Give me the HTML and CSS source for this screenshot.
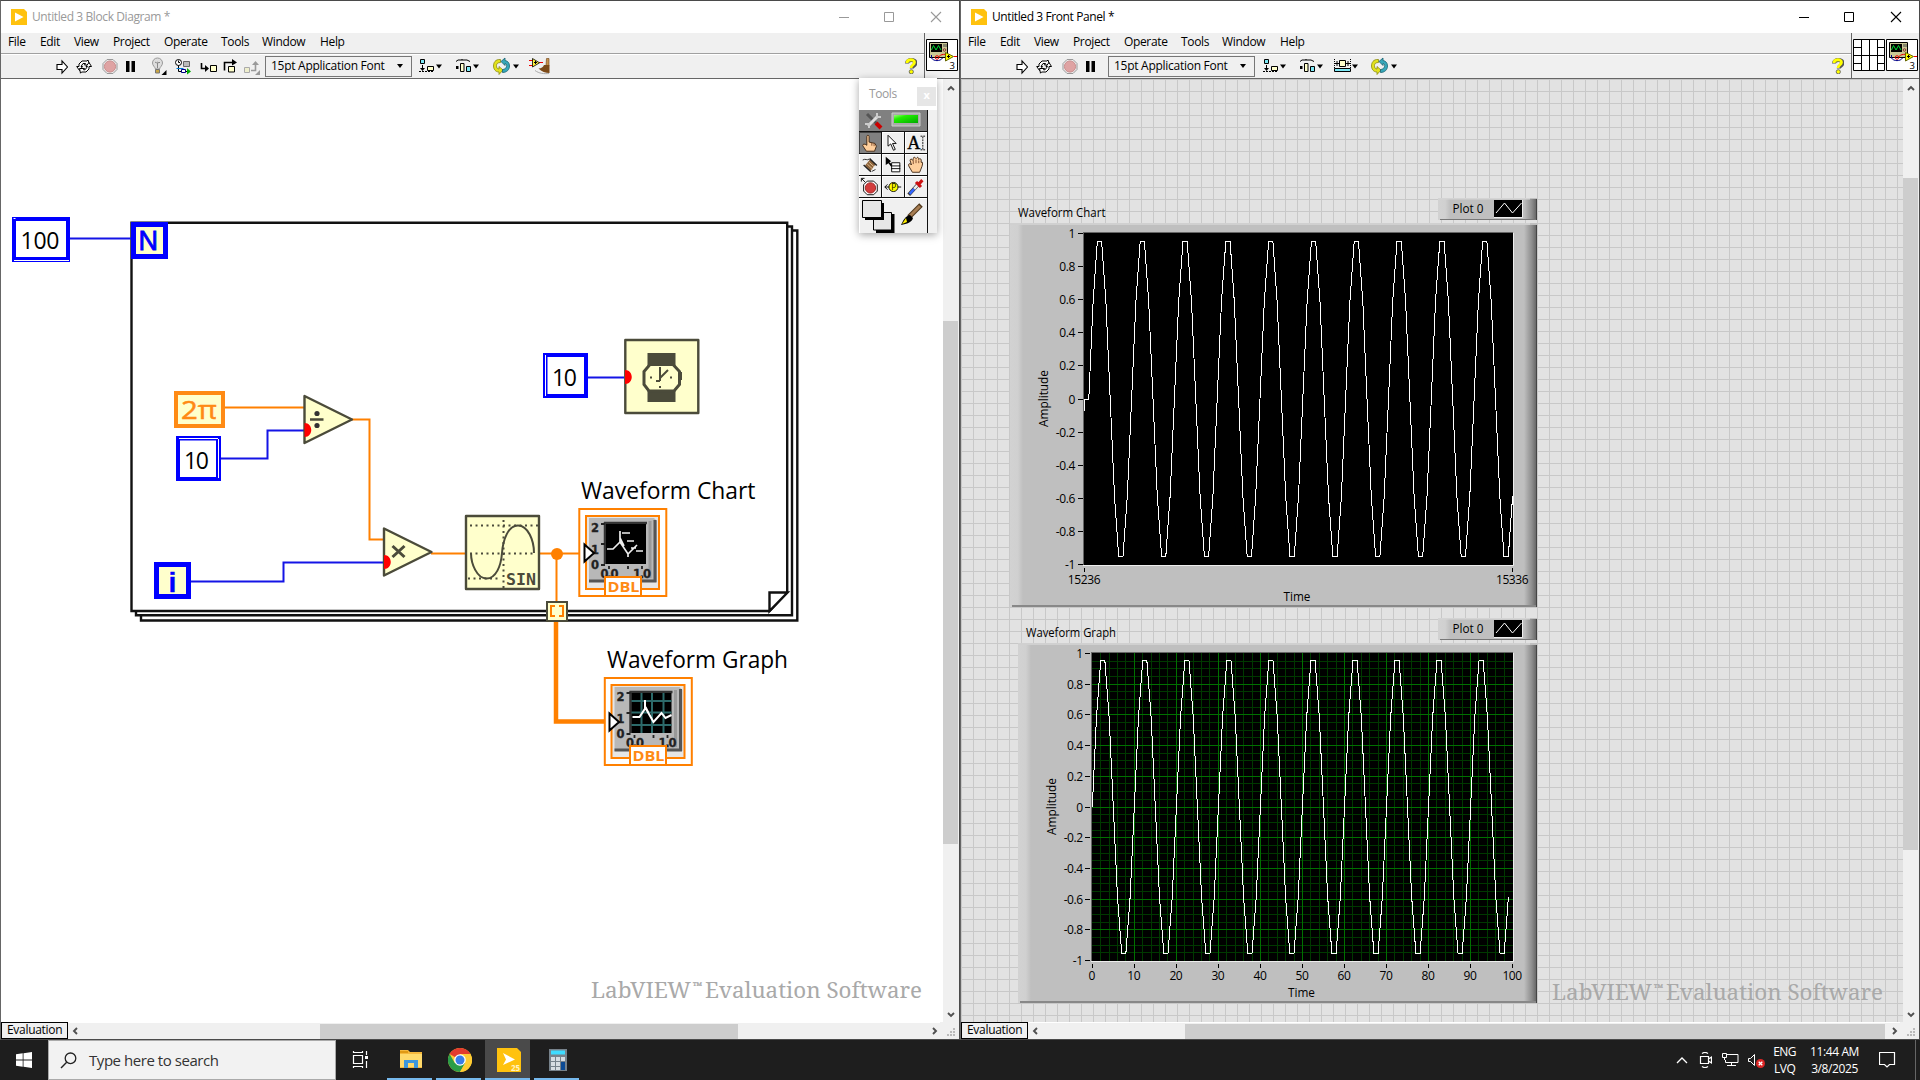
FILE: index.html
```html
<!DOCTYPE html>
<html lang="en">
<head>
<meta charset="utf-8">
<title>Untitled 3</title>
<link rel="stylesheet" href="styles.css">
</head>
<body>
<svg class="defs" width="0" height="0" aria-hidden="true">
  <defs>
    <symbol id="logo" viewBox="0 0 16 16"><path d="M0 0h13l3 3v13H0z" fill="#ffc20e"/><path d="M4 3.500l8.500 4.500L4 12.500z" fill="#fff"/></symbol>
    <symbol id="run" viewBox="0 0 12 20"><path d="M1 8.500h5V5l5.500 6L6 17v-3.500H1z" fill="#fff" stroke="#000" stroke-width="1.100"/></symbol>
    <symbol id="cont" viewBox="0 0 16 20"><g fill="#fff" stroke="#000"><path d="M3 10.500V8l3-3h5l1-1 1.500 5H8.500l1-1.500H7L5 10.500h1.500L3.500 14.500 0.700 10.500z"/><path d="M13 10.500V13l-3 3H5.500l-1 1.200L3.500 12.500h5l-1 1.300H9l2.500-3.300H10L13 6.500l2.500 4z"/></g></symbol>
    <symbol id="abort" viewBox="0 0 16 20"><path d="M5 3.500h6l4 4v6l-4 4H5l-4-4v-6z" fill="#eee" stroke="#999"/><circle cx="8" cy="10.500" r="5.600" fill="#dfa3a3" stroke="#c98d8d"/></symbol>
    <symbol id="pause" viewBox="0 0 10 20"><path d="M0 5h3.500v11H0zM5.500 5H9v11H5.500z" fill="#000"/></symbol>
    <symbol id="bulb" viewBox="0 0 17 20"><path d="M4.500 13C4 11 1.500 9.500 1.500 7a5 5 0 0 1 10 0c0 2.500-2.500 4-3 6z" fill="#ddd" stroke="#999"/><path d="M4 6l1.500 1L6.500 6l1.500 1 1-1M6.500 7v5" stroke="#888" fill="none"/><path d="M4.500 13.500h4v3.500h-4z" fill="#c8a545" stroke="#777"/><path d="M15.500 14v5h-5z"/></symbol>
    <symbol id="retain" viewBox="0 0 17 20"><circle cx="3.500" cy="6.500" r="3" fill="#fff" stroke="#000"/><path d="M3.500 4.500v2h1.500M3.500 9.500v6H6M11 15.500h3" stroke="#000" fill="none"/><path d="M8.500 5.500h6v5h-6z" fill="#bbb" stroke="#666"/><path d="M1.500 12.500h7" stroke="#007bd8"/><path d="M6.500 13.500h4v3h-4z" fill="#fff" stroke="#000080"/><path d="M12 12l4 3.500-4 3z" fill="#0a0"/></symbol>
    <symbol id="into" viewBox="0 0 17 20"><path d="M1.500 7v5.500H7" stroke="#000" stroke-width="1.600" fill="none"/><path d="M5 9l4 3.500L5 16z"/><path d="M10.500 9.500h6v6h-6z" fill="#ffc" stroke="#000"/></symbol>
    <symbol id="over" viewBox="0 0 16 20"><path d="M1.500 14.500V6.500H12" stroke="#000" stroke-width="1.600" fill="none"/><path d="M9 3l5 3.500-5 3z"/><path d="M5.500 10.500h6v5.500h-6z" fill="#ffc" stroke="#000"/></symbol>
    <symbol id="out" viewBox="0 0 18 20"><path d="M1.500 11.500h5v5h-5z" fill="#eec" stroke="#aaa"/><path d="M8 14.500h4.500V8" stroke="#999" stroke-width="1.600" fill="none"/><path d="M9 9l3.500-4L16 9z" fill="#999"/><path d="M17 14v5h-5z" fill="#999"/></symbol>
    <symbol id="align" viewBox="0 0 24 20"><path d="M1.500 3.500h4v4h-4z" fill="#7de8f5" stroke="#000"/><path d="M3.500 9v4" stroke="#000"/><path d="M1 12h5l-2.500 3z"/><path d="M0 15.500h15" stroke="#000" stroke-dasharray="2 1"/><path d="M8.500 10.500h6v4h-6z" fill="#ffc" stroke="#000"/><path d="M17 8.500h6l-3 4z"/></symbol>
    <symbol id="dist" viewBox="0 0 24 20"><path d="M1 5.500L3 4h9l3 1.500M7 3v1" stroke="#000" fill="none"/><path d="M1 10h2.500v3H1z"/><path d="M5.500 7.500h3.500v8H5.500z" fill="#ffc" stroke="#000"/><path d="M11.500 10.500h4v5h-4z" fill="#7de8f5" stroke="#000"/><path d="M18 8.500h6l-3 4z"/></symbol>
    <symbol id="size" viewBox="0 0 24 20"><path d="M5.500 4.500h6v6h-6z" fill="#ffc" stroke="#000"/><path d="M.5 3v9M16.500 3v9" stroke="#000" stroke-dasharray="1 1"/><path d="M1 7.500h4M12 7.500h4M3 5v5M14 5v5" stroke="#000"/><path d="M.5 12.500h16v3H.5z" fill="#7de8f5" stroke="#000"/><path d="M18 8.500h6l-3 4z"/></symbol>
    <symbol id="order" viewBox="0 0 26 20"><path d="M7.500 3.500C2 3 .5 7 .5 10s2 6 5.500 6v2.500L10 14l-4-3.500V13c-2 0-2.500-1.500-2.500-3.500S5 6.500 7.500 6.500z" fill="#e2e21c" stroke="#8a8a10" stroke-width=".8"/><path d="M9.500 16.500C14 16.500 16.500 13.500 16.500 10S14.500 5 12 4.500V2L8 5.500 12 9.500V7.500c1.500.5 2 1.500 1.500 3S12 13.500 9.500 13.500z" fill="#38a8ba" stroke="#17616e" stroke-width=".8"/><path d="M20 8.500h6l-3 4z"/></symbol>
    <symbol id="clean" viewBox="0 0 22 20"><path d="M0 4.500h4M0 9.500h4M10 6.500h4" stroke="#e00"/><path d="M3.500 2.500v8.500l7-4.200z" fill="#ffef3a" stroke="#000" stroke-width=".8"/><path d="M5 6.500h3M6.500 5v3" stroke="#000"/><path d="M17.500 2.500h2.500v7h-3z" fill="#c8924c" stroke="#6b4012" stroke-width=".6"/><path d="M15 9h5.500v8c-4 0-8-1.500-11-4.500 3 0 4.500-1.500 5.500-3.500z" fill="#7d4b19"/><path d="M6 14.500c4 3 9 3.500 14 3" stroke="#aaa" fill="none"/></symbol>
    <symbol id="help" viewBox="0 0 12 16"><path d="M2 5.500C2 1 10.500 1 10.500 4.800 10.500 8 6.800 7.500 6.800 10.500" fill="none" stroke="#555" stroke-width="4"/><path d="M2 5C2 .8 9.500.8 9.500 4.300 9.500 7 6 7 6 10" fill="none" stroke="#ff0" stroke-width="2.800"/><circle cx="6.300" cy="13.800" r="2.100" fill="#ff0" stroke="#555" stroke-width=".8"/></symbol>
    <symbol id="vi" viewBox="0 0 32 32"><path d="M.5.500h31v31H.5z" fill="#fff" stroke="#000"/><path d="M3.500 3.500h18v15h-18z" fill="#c9c795" stroke="#000"/><path d="M5 5h11v8H5z" fill="#000"/><path d="M5.500 11l2-4.500 2.500 4.500 2.500-4.500 2.500 4.500" stroke="#0d3" fill="none"/><path d="M18 5v3M20 5v3" stroke="#444"/><circle cx="18.500" cy="11" r="1.300" fill="none" stroke="#833"/><path d="M5.500 16v3c2 3.500 9 3.500 11 0" fill="none" stroke="#008"/><circle cx="11" cy="18.500" r="1.800" fill="none" stroke="#e00"/><path d="M13 17.500c2-2 4-2.200 6-2.200M28 17.500h3" fill="none" stroke="#e00"/><path d="M19.500 13.500v8.500l8-4.500z" fill="#ff0" stroke="#660"/><path d="M21 17.500h3M22.500 16v3" stroke="#000"/><text x="23.500" y="29.500" font-size="9.500">3</text></symbol>
    <symbol id="pane" viewBox="0 0 32 32"><path d="M.5.500h31v31H.5z" fill="#fff"/><path d="M.5.500h31v31H.5zM8.500 0v32M16.500 0v32M24.500 0v32M0 16.500h32M0 8.500h8M0 24.500h8M24 8.500h8M24 24.500h8" fill="none" stroke="#000"/></symbol>
    <symbol id="wmin" viewBox="0 0 12 12"><path d="M1 6.500h10" stroke="currentColor"/></symbol>
    <symbol id="wmax" viewBox="0 0 12 12"><path d="M1.500 1.500h9v9h-9z" fill="none" stroke="currentColor"/></symbol>
    <symbol id="wclose" viewBox="0 0 12 12"><path d="M1 1l10 10M11 1L1 11" stroke="currentColor" stroke-width="1.100"/></symbol>
    <symbol id="chev" viewBox="0 0 8 6"><path d="M1 5l3-3 3 3" fill="none" stroke="#505050" stroke-width="1.900"/></symbol>
    <symbol id="grip" viewBox="0 0 9 9"><path d="M6 0h2v2H6zM3 3h2v2H3zM6 3h2v2H6zM0 6h2v2H0zM3 6h2v2H3zM6 6h2v2H6z" fill="#bbb"/></symbol>
    <g id="terminal">
      <path d="M579.300 509h87v87h-87z" fill="#fff" stroke="#ff8000" stroke-width="2"/>
      <path d="M586 516h73v73h-73z" fill="#e6e6e6" stroke="#ff8000" stroke-width="2"/>
      <path d="M589 518h65l3 3v61h-68z" fill="#b8b8b8"/>
      <path d="M655 520v61h-66" fill="none" stroke="#555" stroke-width="3"/>
      <path d="M650 521v57" stroke="#999" stroke-width="3"/>
      <path d="M604 523h43M605 522v42" stroke="#333" stroke-width="2.500"/>
      <path d="M606 524h40v40h-40z"/>
      <path d="M601 524h4M601 544h4M601 565h4M609 566v3M628 566v3M642 566v3" stroke="#222" stroke-width="1.800"/>
      <g class="tiny"><text x="591" y="531.500">2</text><text x="591" y="553.500">1</text><text x="591" y="568.500">0</text><text x="600.500" y="578" textLength="18">0.0</text><text x="633" y="578" textLength="18">1.0</text></g>
    </g>
    <g id="dbl">
      <path d="M605 577h36v19h-36z" fill="#fff" stroke="#ff8000" stroke-width="2"/>
      <text x="607.500" y="592" class="dbl" textLength="32" lengthAdjust="spacingAndGlyphs">DBL</text>
      <path d="M584.500 544.500v17l9.500-8.500z" fill="#fff" stroke="#000" stroke-width="2"/>
    </g>
    <linearGradient id="bevelL"><stop offset="0" stop-color="#d2d2d2"/><stop offset=".6" stop-color="#d0d0d0"/><stop offset="1" stop-color="#bfbfbf"/></linearGradient>
    <linearGradient id="bevelR"><stop offset="0" stop-color="#bfbfbf"/><stop offset=".6" stop-color="#8d8d8d"/><stop offset="1" stop-color="#606060"/></linearGradient>
    <linearGradient id="led" x2="1" y2="1"><stop offset="0" stop-color="#9f7"/><stop offset=".3" stop-color="#2e0"/><stop offset="1" stop-color="#0a0"/></linearGradient>
    <g id="legend">
      <path d="M1438 198h99v22h-99z" fill="#bfbfbf"/>
      <path d="M1438 198h12v22h-12z" fill="url(#bevelL)"/>
      <path d="M1524 199h13v21h-13z" fill="url(#bevelR)"/>
      <path d="M1438 198h92v1.500h-92z" fill="#d4d4d4"/>
      <path d="M1440 219.500h97" stroke="#777"/><path d="M1536.500 199v21" stroke="#444"/>
      <path d="M1494 200h28v17h-28z"/><path d="M1494 217.500h28.500V200" fill="none" stroke="#eee"/>
      <path d="M1496 213l8.500-10 8 10 9-10" fill="none" stroke="#fff"/>
      <text x="1452.500" y="212.500" textLength="31" lengthAdjust="spacingAndGlyphs">Plot 0</text>
    </g>
  </defs>
</svg>

<div class="desktop">
  <main class="windows">
    <section class="window inactive">
      <header class="titlebar">
        <svg class="logo"><use href="#logo"/></svg>
        <h1 class="title">Untitled 3 Block Diagram *</h1>
        <div class="winbtns"><svg><use href="#wmin"/></svg><svg><use href="#wmax"/></svg><svg><use href="#wclose"/></svg></div>
      </header>
      <div class="chrome">
        <div class="bars">
          <nav class="menubar"><span>File</span><span>Edit</span><span>View</span><span>Project</span><span>Operate</span><span>Tools</span><span>Window</span><span>Help</span></nav>
          <div class="toolbar">
            <div class="tools diagram-tools">
              <svg width="12"><use href="#run"/></svg><svg width="16"><use href="#cont"/></svg><svg width="16"><use href="#abort"/></svg><svg width="10"><use href="#pause"/></svg><svg width="17"><use href="#bulb"/></svg><svg width="17"><use href="#retain"/></svg><svg width="17"><use href="#into"/></svg><svg width="16"><use href="#over"/></svg><svg width="18"><use href="#out"/></svg>
              <div class="combo"><span>15pt Application Font</span><i></i></div>
              <svg width="24"><use href="#align"/></svg><svg width="24"><use href="#dist"/></svg><svg width="26"><use href="#order"/></svg><svg width="22"><use href="#clean"/></svg>
            </div>
            <svg class="help"><use href="#help"/></svg>
          </div>
        </div>
        <div class="vicell"><svg><use href="#vi"/></svg></div>
      </div>
      <div class="body">
        <svg class="canvas" viewBox="1 79 942 943">
          <g class="loop"><path d="M141 230.500h656.300v390H141z"/><path d="M136 226.500h656v388.800H136z"/><path d="M131.500 222.700h655.700v369.500L769.500 611H131.500z"/><path d="M769.500 611v-18.500h18z"/></g>
          <g class="wire blue"><path d="M70 238.500h62M588 377.500h36M221 458.500h46.500v-28H305M191 581.500h92.500v-19H385"/></g>
          <g class="wire orange"><path d="M225 407.500h79M352 419.500h17.500v120H384M431 553.500h34M540 553.500h39M556.500 553.500V602"/><path class="array" d="M556 621v100.500h48"/></g>

          <g class="const"><path class="frame" d="M12 217h58v45H12z"/><path class="hair" d="M14 260.500h55M13.500 218.500h2"/><path class="fill" d="M16 221h50v36H16z"/><text x="20.500" y="249" textLength="39">100</text></g>
          <g class="const"><path class="frame" d="M176 436h45v45h-45z"/><path class="hair" d="M179 438.500h39M218.500 439v39"/><path class="fill" d="M180 440.500h36V477h-36z"/><text x="184" y="469" textLength="25">10</text></g>
          <g class="const"><path class="frame" d="M543 353h45v45h-45z"/><path class="hair" d="M545.500 355v41"/><path class="fill" d="M547.500 357H584v37h-36.500z"/><text x="552" y="385.500" textLength="25">10</text></g>

          <g class="terminal-int"><path d="M133.500 224.500h32v32h-32z"/><text class="n" x="148.200" y="249.500">N</text><path d="M156.500 564.500h32v32h-32z"/><text x="172.500" y="592" class="i">i</text></g>

          <path d="M176 393h47v33h-47z" fill="#ffffcc" stroke="#ff8a14" stroke-width="4"/>
          <text class="pi" x="181" y="418.500" textLength="36" lengthAdjust="spacingAndGlyphs">2π</text>

          <g class="prim"><path d="M304.500 396v47l47.500-23.500z"/><path d="M384 528.500v47l47.500-23.500z"/></g>
          <g stroke="#4b4b3a" stroke-width="2.500"><path d="M310 419.500h13.500"/><path d="M392.500 546l12 11M404.500 546l-12 11" stroke-width="3"/></g>
          <circle cx="317" cy="413.500" r="2.600" fill="#333"/><circle cx="317" cy="425.500" r="2.600" fill="#333"/>

          <g class="prim"><path d="M466 516h73v73h-73z"/><path d="M625.300 340h73v73h-73z"/></g>
          <g fill="none" stroke="#4b4b3a" stroke-width="2"><path d="M470 525.500h68M470 553.500h66M468 578.500h33M503.500 520v68" stroke-dasharray="2 3.500"/><path d="M471 553c0 11 6 25.500 15.500 25.500S501 566 502 553s6-27.500 16-27.500 16 15 16 27.500"/></g>
          <text class="sin" x="506" y="584.500" textLength="30" lengthAdjust="spacingAndGlyphs">SIN</text>
          <g fill="#4b4b3a"><path d="M647.500 353h28v49h-28z"/><path d="M679 372h3v8h-3z"/></g>
          <path d="M650 364.500h23l6.500 7v13l-5.500 6.500h-25l-5-6.500v-13z" fill="#ffffcc" stroke="#4b4b3a" stroke-width="3"/>
          <path d="M660 367v14M660 378l8-8M656 381h4" stroke="#4b4b3a" stroke-width="2"/><path d="M650 377.500h2M670 377.500h2M660 386v2" stroke="#4b4b3a" stroke-width="2"/>
          <g fill="#f00"><path d="M304.500 423c9 0 9 14 0 14zM384 555c9 0 9 14 0 14zM625 370c9 0 9 14 0 14z"/></g>
          <circle cx="557" cy="554" r="6" fill="#ff8000"/>

          <path d="M547 602h20v19h-20z" fill="#ffffcc" stroke="#4b4b3a" stroke-width="2"/><path d="M555 606h-4v10h4M559 606h4v10h-4" fill="none" stroke="#ff8000" stroke-width="2"/>

          <use href="#terminal"/>
          <path d="M607 549h6l7-7 8 12 9-9M620 531v12M620 538l4 8M622 533h8M627 541h7M631 548h5M636 551h7M628 553v4" stroke="#eee" stroke-width="1.700" fill="none"/>
          <use href="#dbl"/>
          <use href="#terminal" x="25.500" y="169"/>
          <path d="M641.500 693v40M652 693v40M663.500 693v40M631.500 701h40M631.500 712.500h40M631.500 725h40" stroke="#2c6a6a" stroke-width="2"/>
          <path d="M632.500 717h7l6-9 8 14 8-9 4 5 6-3M645 700v10M645.500 707l3 6" stroke="#fff" stroke-width="2" fill="none"/>
          <use href="#dbl" x="25" y="169"/>

          <g class="label"><text x="581" y="499" textLength="174.500" lengthAdjust="spacingAndGlyphs">Waveform Chart</text><text x="607" y="668" textLength="181" lengthAdjust="spacingAndGlyphs">Waveform Graph</text></g>
          <g class="watermark"><text x="591" y="998" textLength="100" lengthAdjust="spacingAndGlyphs">LabVIEW</text><text class="tm" x="693" y="990">™</text><text x="705" y="998" textLength="217" lengthAdjust="spacingAndGlyphs">Evaluation Software</text></g>
        </svg>
        <div class="vscroll"><svg><use href="#chev"/></svg><div class="track"><div class="thumb diagram-v"></div></div><svg class="down"><use href="#chev"/></svg></div>
      </div>
      <footer class="foot">
        <span class="eval">Evaluation</span><div class="hscroll"><svg class="left"><use href="#chev"/></svg><div class="track"><div class="thumb diagram-h"></div></div><svg class="right"><use href="#chev"/></svg></div><svg class="grip"><use href="#grip"/></svg>
      </footer>

      <aside class="palette">
        <div class="palette-title"><span>Tools</span><b>x</b></div>
        <div class="palette-grid">
          <div class="auto"><svg width="68" height="21"><g fill="none" stroke-width="3"><path d="M8 4l12 12" stroke="#555"/><path d="M9 16L19 6" stroke="#ddd"/><path d="M17 13l5 5" stroke="#c00" stroke-width="4"/><path d="M18 3v4h4M6 14h4v4" stroke="#ccc" stroke-width="2"/></g><path d="M33 3h28v13H33z" fill="#aaa" stroke="#ccc"/><path d="M35 5h24v8H35z" fill="url(#led)"/></svg></div>
          <div class="cell on"><svg viewBox="0 0 22 22"><path d="M7.500 12V4c0-2 2.500-2 2.500 0v6l6.500 1.500 1.500 3-2 5.500H7L3 14c0-2 2-2.500 4.500-.5z" fill="#ffcf9c" stroke="#3d2412"/><path d="M13 11v3M15.500 11.500v3" stroke="#7c4a2a"/></svg></div>
          <div class="cell"><svg viewBox="0 0 22 22"><path d="M5.500 2.500v12l3-2.500 3 7 2-1-3-6.500h4z" fill="#fff" stroke="#000"/></svg></div>
          <div class="cell"><svg viewBox="0 0 22 22"><text x="1.500" y="18" class="letter">A</text><path d="M18.500 4v14M16 3.500h5M16 18.500h5" stroke="#000" stroke-dasharray="2 1"/></svg></div>
          <div class="cell"><svg viewBox="0 0 22 22"><path d="M3 5.500c3-2 5 1 7-1M13 18l4-2" fill="none" stroke="#222"/><path d="M5.500 11.500L11 5l6 5.500-5.500 7z" fill="#8c6239"/><path d="M4 11l8 7.500M10.500 4l8 7.500" stroke="#222" stroke-width="1.600"/><path d="M8 10l6 5.500M10 8l5.500 5" stroke="#e4c398"/></svg></div>
          <div class="cell"><svg viewBox="0 0 22 22"><path d="M3 2v9l3-2 3 4 2-2-4-3 2-1z"/><path d="M9.500 8.500h9v10h-9zM9 12h10M9 15h10" fill="#fff" stroke="#000"/></svg></div>
          <div class="cell"><svg viewBox="0 0 22 22"><path d="M7 19L3 12c-1-3 2-3 3-1L4.500 6c0-2 2-2 3 0L8 4c0-2 2-2 3 0l1-1c1-1 2 0 2 2l1-1c2 0 2 2 1.500 4L18 8c1 2-1 6-3 11z" fill="#ffcf9c" stroke="#3d2412"/><path d="M8 6v4M11 5v4M14 6v3" stroke="#7c4a2a"/></svg></div>
          <div class="cell"><svg viewBox="0 0 22 22"><path d="M1.500 5V1.500H5M2 2l4 4" stroke="#000" fill="none"/><path d="M8 4.500h7l4 4v7l-4 4H8l-4-4v-7z" fill="#fff" stroke="#000"/><circle cx="11.500" cy="12" r="5.700" fill="#d33c3c" stroke="#922"/></svg></div>
          <div class="cell"><svg viewBox="0 0 22 22"><path d="M2 11h18M5 8L2 11l3 3" stroke="#000" fill="none"/><circle cx="11.500" cy="11" r="5" fill="#ff0" stroke="#000"/><text x="9" y="14.500" font-size="9">P</text></svg></div>
          <div class="cell"><svg viewBox="0 0 22 22"><path d="M3 19.500L13 8.500" stroke="#333" stroke-width="4"/><path d="M4 18.500l5-5.500" stroke="#36f" stroke-width="2.800"/><path d="M9 13l4-4.500" stroke="#eee" stroke-width="2.800"/><path d="M11 5.500l5.500 5.500M13.500 8.500L18 3.500" stroke="#c11" stroke-width="3.500"/></svg></div>
          <div class="colors"><svg width="68" height="35"><path d="M16 15h18.500v19H16z"/><path d="M13.500 13.500h18v17.500h-18z" fill="#e6e6e6" stroke="#000"/><path d="M5 4h19v17H5z"/><path d="M2.500 1.500h19v17h-19z" fill="#e6e6e6" stroke="#000"/><path d="M61 6L49 18" stroke="#4d3519" stroke-width="5"/><path d="M60 7L50 17" stroke="#a67c52" stroke-width="3"/><path d="M50 16l3 3c-1 4-6 6-12 7 2-4 4-9 9-10z"/><path d="M42 25l4-6 1 4z" fill="#fe0"/></svg></div>
        </div>
      </aside>
    </section>

    <section class="window">
      <header class="titlebar">
        <svg class="logo"><use href="#logo"/></svg>
        <h1 class="title">Untitled 3 Front Panel *</h1>
        <div class="winbtns"><svg><use href="#wmin"/></svg><svg><use href="#wmax"/></svg><svg><use href="#wclose"/></svg></div>
      </header>
      <div class="chrome">
        <div class="bars">
          <nav class="menubar"><span>File</span><span>Edit</span><span>View</span><span>Project</span><span>Operate</span><span>Tools</span><span>Window</span><span>Help</span></nav>
          <div class="toolbar">
            <div class="tools panel-tools">
              <svg width="12"><use href="#run"/></svg><svg width="16"><use href="#cont"/></svg><svg width="16"><use href="#abort"/></svg><svg width="10"><use href="#pause"/></svg>
              <div class="combo"><span>15pt Application Font</span><i></i></div>
              <svg width="24"><use href="#align"/></svg><svg width="24"><use href="#dist"/></svg><svg width="24"><use href="#size"/></svg><svg width="26"><use href="#order"/></svg>
            </div>
            <svg class="help"><use href="#help"/></svg>
          </div>
        </div>
        <div class="vicell"><svg><use href="#pane"/></svg><svg><use href="#vi"/></svg></div>
      </div>
      <div class="body">
        <svg class="canvas panel" viewBox="961 79 942 943">
          <g class="plot" id="chart">
            <use href="#legend"/>
            <text x="1018" y="217" textLength="87.500" lengthAdjust="spacingAndGlyphs">Waveform Chart</text>
            <path d="M1010 223h527v384h-527z" fill="#bfbfbf"/><path d="M1010 223h13v384h-13z" fill="url(#bevelL)"/><path d="M1524 225h13v382h-13z" fill="url(#bevelR)"/>
            <path d="M1010 223h520v2h-520z" fill="#d0d0d0"/><path d="M1012 606h525" stroke="#888" stroke-width="2"/><path d="M1536.500 225v382" stroke="#444"/>
            <path d="M1083 232h430v333h-430z"/><path d="M1083 232.500h430M1083.500 232v333" stroke="#666"/><path d="M1083 565.500h430.500V233" fill="none" stroke="#eee"/>
            <text x="1283.500" y="601" textLength="27" lengthAdjust="spacingAndGlyphs">Time</text>
            <text transform="translate(1048 427) rotate(-90)" textLength="57" lengthAdjust="spacingAndGlyphs">Amplitude</text>
          </g>
          <g class="plot" id="graph">
            <use href="#legend" y="420"/>
            <text x="1026" y="637" textLength="90" lengthAdjust="spacingAndGlyphs">Waveform Graph</text>
            <path d="M1018 643h519v360h-519z" fill="#bfbfbf"/><path d="M1018 643h13v360h-13z" fill="url(#bevelL)"/><path d="M1524 645h13v358h-13z" fill="url(#bevelR)"/>
            <path d="M1018 643h512v2h-512z" fill="#d0d0d0"/><path d="M1020 1002h517" stroke="#888" stroke-width="2"/><path d="M1536.500 645v358" stroke="#444"/>
            <path d="M1091 652h422v309h-422z"/><path d="M1091 652.500h422M1091.500 652v309" stroke="#666"/><path d="M1091 961.500h422.500V653" fill="none" stroke="#eee"/>
            <text x="1288" y="997" textLength="27" lengthAdjust="spacingAndGlyphs">Time</text>
            <text transform="translate(1055.500 835) rotate(-90)" textLength="57" lengthAdjust="spacingAndGlyphs">Amplitude</text>
          </g>
          <g class="watermark"><text x="1552" y="1000" textLength="100" lengthAdjust="spacingAndGlyphs">LabVIEW</text><text class="tm" x="1654" y="992">™</text><text x="1666" y="1000" textLength="217" lengthAdjust="spacingAndGlyphs">Evaluation Software</text></g>
        </svg>
        <div class="vscroll"><svg><use href="#chev"/></svg><div class="track"><div class="thumb panel-v"></div></div><svg class="down"><use href="#chev"/></svg></div>
      </div>
      <footer class="foot">
        <span class="eval">Evaluation</span><div class="hscroll"><svg class="left"><use href="#chev"/></svg><div class="track"><div class="thumb panel-h"></div></div><svg class="right"><use href="#chev"/></svg></div><svg class="grip"><use href="#grip"/></svg>
      </footer>
    </section>
  </main>

  <footer class="taskbar">
    <div class="start"><svg width="16" height="16"><path d="M0 2.300L6.700 1.300v6.200H0zM7.500 1.200L16 0v7.500H7.500zM0 8.400h6.700v6.300L0 13.700zM7.500 8.400H16V16l-8.500-1.200z" fill="#fff"/></svg></div>
    <div class="search"><svg width="17" height="17"><circle cx="10.500" cy="6.300" r="5.300" fill="none" stroke="#222" stroke-width="1.300"/><path d="M6.700 10.200L1 16" stroke="#222" stroke-width="1.400"/></svg><span>Type here to search</span></div>
    <div class="apps">
      <div class="app view"><svg width="17" height="17"><path d="M1.500 4.500h9v8h-9zM1.500 0v1.500h9V0M1.500 17v-1.500h9V17M14.500 0v4M14.500 10v7" fill="none" stroke="#fff" stroke-width="1.200"/><path d="M13 5h3v3h-3z" fill="#fff"/></svg></div>
      <div class="app run"><svg width="22" height="19"><path d="M0 0h8l2 2h12v16H0z" fill="#f5b83d"/><path d="M0 4h22v13H0z" fill="#ffda6b"/><path d="M0 1h8v2H0z" fill="#e09a14"/><path d="M4 10h14v8h-4v-5H8v5H4z" fill="#3d97dc"/></svg></div>
      <div class="app run"><svg width="24" height="24" viewBox="0 0 24 24"><circle cx="12" cy="12" r="12" fill="#fc3"/><path d="M12 12L1.600 6A12 12 0 0 1 22.400 6H12z" fill="#e33b2e"/><path d="M1.600 6A12 12 0 0 0 12 24l5.200-9L12 12 6.800 15z" fill="#2a9d48"/><path d="M12 24a12 12 0 0 0 10.400-18H12l5.200 9z" fill="#fc3"/><circle cx="12" cy="12" r="5.800" fill="#fff"/><circle cx="12" cy="12" r="4.500" fill="#3a7de8"/></svg></div>
      <div class="app run active"><svg width="24" height="24" viewBox="0 0 24 24"><path d="M0 0h20l4 4v20H0z" fill="#ffc20e"/><path d="M6 5l12 6.500L6 17l3-5.500z" fill="#fff"/><text x="14" y="22.500" class="ver">25</text></svg></div>
      <div class="app run"><svg width="18" height="24"><path d="M0 1h18v22H0z" fill="#77828b"/><path d="M2 2.500h14v4H2z" fill="#3fdcff"/><path d="M2 9h4v4H2zM7 9h4v4H7zM12 9h4v4h-4zM2 14h4v4H2zM7 14h4v4H7zM2 19h4v3H2zM7 19h4v3H7z" fill="#d7dde2"/><path d="M12 14h4v8h-4z" fill="#0c4a94"/></svg></div>
    </div>
    <div class="tray">
      <svg width="12" height="8"><path d="M1 7l5-5 5 5" fill="none" stroke="#fff" stroke-width="1.300"/></svg>
      <svg width="13" height="16"><path d="M1.500 4.500h8v7h-8zM9.500 7l3-2v6l-3-2M3 1.500c2-1.500 4-1.500 6 0M3 14.500c2 1.500 4 1.500 6 0" fill="none" stroke="#fff" stroke-width="1.200"/></svg>
      <svg width="17" height="14"><path d="M5 1.500h11v8H3.500V7M9.500 10v3M5 12.500h9M.5.500h4v4h-4zM2.500 4v3" fill="none" stroke="#fff"/></svg>
      <svg width="18" height="15"><path d="M.5 5.500h2l4-4v11l-4-4h-2z" fill="none" stroke="#fff"/><circle cx="12.500" cy="10.500" r="4.500" fill="#dc2626"/><path d="M10.700 8.700l3.600 3.600M14.300 8.700l-3.600 3.600" stroke="#fff" stroke-width="1.300"/></svg>
      <div class="two lang"><span>ENG</span><span>LVQ</span></div>
      <div class="two clock"><span>11:44 AM</span><span>3/8/2025</span></div>
      <svg width="17" height="16"><path d="M.5.500h15v12h-5l-2.500 2.500-2.500-2.500h-5z" fill="none" stroke="#fff" stroke-width="1.200"/></svg>
    </div>
    <div class="peek"></div>
  </footer>
</div>
<script src="script.js"></script>
</body>
</html>
```
FILE: styles.css
```css
* { box-sizing: border-box; }
body { margin: 0; font: 12px/16px "Open Sans", "Noto Sans", sans-serif; color: #000; }
svg { display: block; flex: none; }
.defs { position: absolute; }
.desktop { width: 1920px; height: 1080px; display: flex; flex-direction: column; overflow: hidden; background: #1e1e1e; }
.windows { height: 1040px; display: flex; }

.window { position: relative; width: 960px; height: 1040px; display: flex; flex-direction: column; border: 1px solid #4a4a4a; border-left-color: #666; background: #f0f0f0; }
.titlebar { height: 32px; display: flex; align-items: center; padding: 0 0 1px 10px; background: #fff; }
.logo { width: 16px; height: 16px; }
.title { margin: 0 0 0 5px; flex: 1; font-size: 12px; font-weight: 400; letter-spacing: -0.4px; line-height: 16px; }
.inactive .titlebar { color: #999; }
.winbtns { display: flex; gap: 34px; padding-right: 17px; }
.winbtns svg { width: 12px; height: 12px; }
.winbtns svg:nth-child(-n+2) { margin-left: -1px; margin-right: 1px; }
.winbtns svg:first-child { margin: 0 0 0 0; }

.chrome { height: 46px; display: flex; border-bottom: 1px solid #666; }
.bars { flex: 1; display: flex; flex-direction: column; }
.menubar { height: 21px; display: grid; grid-template-columns: 32px 34px 39px 51px 57px 41px 58px 40px; padding: 1px 0 0 7px; border-bottom: 1px solid #a0a0a0; letter-spacing: -0.35px; }
.toolbar { height: 24px; display: flex; justify-content: space-between; padding: 1px 7px 0 55px; border-top: 1px solid #fff; }
.tools { display: grid; }
.tools svg { height: 20px; overflow: visible; }
.diagram-tools { grid-template-columns: 20px 26px 24px 25px 24px 25px 23px 20px 22px 154px 36px 38px 36px 24px; }
.panel-tools { grid-template-columns: 20px 26px 24px 22px 155px 36px 35px 37px 30px; }
.combo { width: 147px; height: 21px; display: flex; align-items: center; justify-content: space-between; padding: 0 8px 1px 5px; border: 1px solid #767676; letter-spacing: -0.27px; white-space: nowrap; }
.combo i { border: 3.5px solid transparent; border-top: 4px solid #000; border-bottom: 0; }
.help { width: 12px; height: 16px; margin-top: 2px; }
.vicell { display: flex; gap: 1px; padding: 6px 1px 0 1px; border-left: 1px solid #666; }
.vicell svg { width: 32px; height: 32px; }

.body { height: 943px; display: flex; }
.canvas { width: 942px; height: 943px; background: #fff; }
.panel { background: linear-gradient(90deg, #c8c8c8 1px, transparent 1px) 0 0 / 12px 12px, linear-gradient(#c8c8c8 1px, transparent 1px) 0 0 / 12px 12px, #e2e2e2; }
.vscroll { width: 16px; display: flex; flex-direction: column; align-items: center; padding: 6px 0 4px; background: #f0f0f0; }
.vscroll .track { flex: 1; width: 16px; padding-right: 1px; }
.vscroll svg, .hscroll svg { width: 8px; height: 6px; }
.down { transform: rotate(180deg); }
.left { transform: rotate(-90deg); }
.right { transform: rotate(90deg); }
.thumb { background: #cdcdcd; }
.diagram-v { height: 523px; margin-top: 230px; }
.panel-v { height: 672px; margin-top: 87px; }
.foot { height: 17px; display: flex; align-items: center; }
.eval { width: 67px; height: 17px; border: 1px solid #000; padding-left: 5px; line-height: 13px; letter-spacing: -0.3px; }
.hscroll { flex: 1; height: 17px; display: flex; align-items: center; padding: 0 1px 0 3px; border-top: 1px solid #fff; }
.hscroll .track { flex: 1; height: 15px; }
.hscroll .thumb { height: 15px; }
.diagram-h { width: 418px; margin-left: 241px; }
.panel-h { width: 700px; margin-left: 146px; }
.grip { width: 9px; height: 9px; margin: 4px 3px 0 7px; }

.palette { position: absolute; left: 858px; top: 77px; width: 78px; height: 155px; background: #f0f0f0; box-shadow: 0 2px 8px rgba(0, 0, 0, .35); }
.palette-title { height: 32px; display: flex; justify-content: space-between; padding: 8px 1px 0 10px; background: #fff; color: #999; letter-spacing: -0.4px; }
.palette-title b { width: 19px; height: 19px; margin-top: 1px; background: #e6e6e6; color: #fff; text-align: center; font-size: 11px; }
.palette-grid { width: 69px; height: 123px; display: grid; grid-template-columns: 22px 22px 22px; grid-template-rows: 21px 21px 21px 21px 35px; gap: 1px; padding-right: 1px; padding-bottom: 1px; background: #111; }
.auto, .colors { grid-column: span 3; }
.auto { background: #808080; }
.colors, .cell { background: #f0f0f0; overflow: hidden; border-top: 1px solid #fff; border-left: 1px solid #fff; }
.cell.on { background: #808080; border-color: #444; }
.cell svg { width: 20px; height: 20px; }
.letter { font: 20px "Liberation Serif", serif; stroke: #000; stroke-width: .4; }

.loop path { fill: #fff; stroke: #111; stroke-width: 2.4; }
.wire path { fill: none; stroke-width: 2; }
.blue path { stroke: #1414e6; }
.orange path { stroke: #ff8000; }
.orange .array { stroke-width: 4.500; }
.const text { font-size: 23px; }
.frame { fill: #0000ff; }
.hair { stroke: #fff; fill: none; }
.fill { fill: #fff; }
.terminal-int path { fill: #ffffcc; stroke: #0000ff; stroke-width: 5; }
.terminal-int text { fill: #0000ff; stroke: #0000ff; text-anchor: middle; }
.terminal-int .n { font: 27px "Liberation Sans", Arial, sans-serif; stroke-width: .8; }
.terminal-int .i { font: 700 28.5px "Liberation Sans", Arial, sans-serif; stroke-width: .3; }
.pi { font-size: 25px; fill: #ff8a14; stroke: #ff8a14; stroke-width: .5; }
.prim path { fill: #ffffcc; stroke: #4b4b3a; stroke-width: 2.4; stroke-linejoin: round; }
.sin { font: 700 16px "DejaVu Sans Mono", monospace; fill: #4b4b3a; }
.tiny { font: 700 11.5px "DejaVu Sans", sans-serif; fill: #222; stroke: #222; stroke-width: .3; }
.dbl { font: 700 15px "Open Sans", sans-serif; fill: #ff8a14; }
.label { font-size: 23px; }
.watermark { font: 22.5px "Noto Serif", "Droid Serif", "DejaVu Serif", serif; fill: #a9a9a9; }
.watermark .tm { font-size: 11px; stroke: #a9a9a9; stroke-width: .3; }

.plot { font-size: 12px; }
.tick { stroke: #000; shape-rendering: crispEdges; }
.minor { stroke: #003800; shape-rendering: crispEdges; }
.major { stroke: #007000; shape-rendering: crispEdges; }
.trace { fill: none; stroke: #fff; shape-rendering: crispEdges; }
.end { text-anchor: end; letter-spacing: -0.4px; }
.mid { text-anchor: middle; letter-spacing: -0.4px; }

.taskbar { height: 40px; display: flex; background: #1e1e1e; color: #fff; }
.start { width: 48px; display: flex; align-items: center; justify-content: center; padding-right: 1px; }
.search { width: 288px; height: 40px; display: flex; align-items: center; gap: 12px; padding-left: 11px; background: #f2f2f2; color: #333; border: 1px solid #aaa; font-size: 15px; letter-spacing: -0.45px; }
.apps { display: flex; gap: 4px; padding-left: 2px; }
.app { width: 45px; height: 40px; display: flex; align-items: center; justify-content: center; padding-bottom: 1px; }
.app.run { padding-left: 2px; box-shadow: inset 0 -2px #76b9ed; }
.app.active { background: #4a4a4a; }
.ver { font-size: 8px; font-weight: 700; fill: #fff3c4; }
.tray { flex: 1; display: flex; justify-content: flex-end; align-items: center; gap: 10px; padding-right: 19px; }
.tray svg:nth-child(-n+3) { margin-left: 1px; margin-right: -1px; }
.tray svg:nth-child(2) { margin-left: 2px; }
.two { display: flex; flex-direction: column; align-items: center; line-height: 17px; }
.lang { letter-spacing: -0.5px; margin: 0 4px 0 -3px; }
.clock { letter-spacing: -0.4px; margin-right: 10px; }
.peek { width: 5px; border-left: 1px solid #666; }
```
FILE: script.js
```js
const NS = "http://www.w3.org/2000/svg";

function add(parent, tag, attrs, text) {
  const el = document.createElementNS(NS, tag);
  for (const key in attrs) el.setAttribute(key, attrs[key]);
  if (text !== undefined) el.textContent = text;
  parent.appendChild(el);
}

const sine = (i) => Math.sin((i * Math.PI) / 5);
const crisp = (v) => Math.floor(v) + 0.5;

function drawPlot(id, plot) {
  const group = document.getElementById(id);
  const x = (v) => plot.left + (v * (plot.right - plot.left)) / 100;
  const y = (v) => plot.top + ((1 - v) * (plot.bottom - plot.top)) / 2;

  if (plot.grid) {
    let minor = "", major = "";
    for (let i = 1; i < 50; i++) {
      const line = `M${crisp(x(i * 2))} ${plot.top}V${plot.bottom}`;
      if (i % 5) minor += line; else major += line;
    }
    for (let i = 1; i < 40; i++) {
      const line = `M${plot.left} ${crisp(y(1 - i / 20))}H${plot.right}`;
      if (i % 4) minor += line; else major += line;
    }
    add(group, "path", { class: "minor", d: minor });
    add(group, "path", { class: "major", d: major });
  }

  for (let i = 0; i <= 10; i++) {
    const v = 1 - i / 5;
    const py = crisp(y(v));
    add(group, "path", { class: "tick", d: `M${plot.left - 7} ${py}h5` });
    add(group, "text", { class: "end", x: plot.left - 9.5, y: py + 4.5 }, String(+v.toFixed(1)));
  }
  for (const [v, label] of plot.xLabels) {
    add(group, "path", { class: "tick", d: `M${crisp(x(v))} ${plot.bottom + 3}v4` });
    add(group, "text", { class: "mid", x: x(v) - 0.5, y: plot.bottom + 19.5 }, label);
  }
  add(group, "path", {
    class: "trace",
    d: "M" + plot.points.map(([px, py]) => `${x(px).toFixed(1)} ${y(py).toFixed(1)}`).join("L"),
  });
}

const chartPoints = [[0.05, -0.07], [0.05, 0]];
for (let i = 1; i <= 100; i++) chartPoints.push([i, sine(i - 1)]);
drawPlot("chart", {
  left: 1084.5, right: 1512.6, top: 233.4, bottom: 564.6,
  xLabels: [[0, "15236"], [100, "15336"]],
  points: chartPoints,
});

const graphPoints = [];
const graphLabels = [];
for (let i = 0; i < 100; i++) graphPoints.push([i, sine(i)]);
for (let i = 0; i <= 100; i += 10) graphLabels.push([i, String(i)]);
drawPlot("graph", {
  left: 1092.3, right: 1512.6, top: 653.4, bottom: 960.6,
  grid: true,
  xLabels: graphLabels,
  points: graphPoints,
});
```
